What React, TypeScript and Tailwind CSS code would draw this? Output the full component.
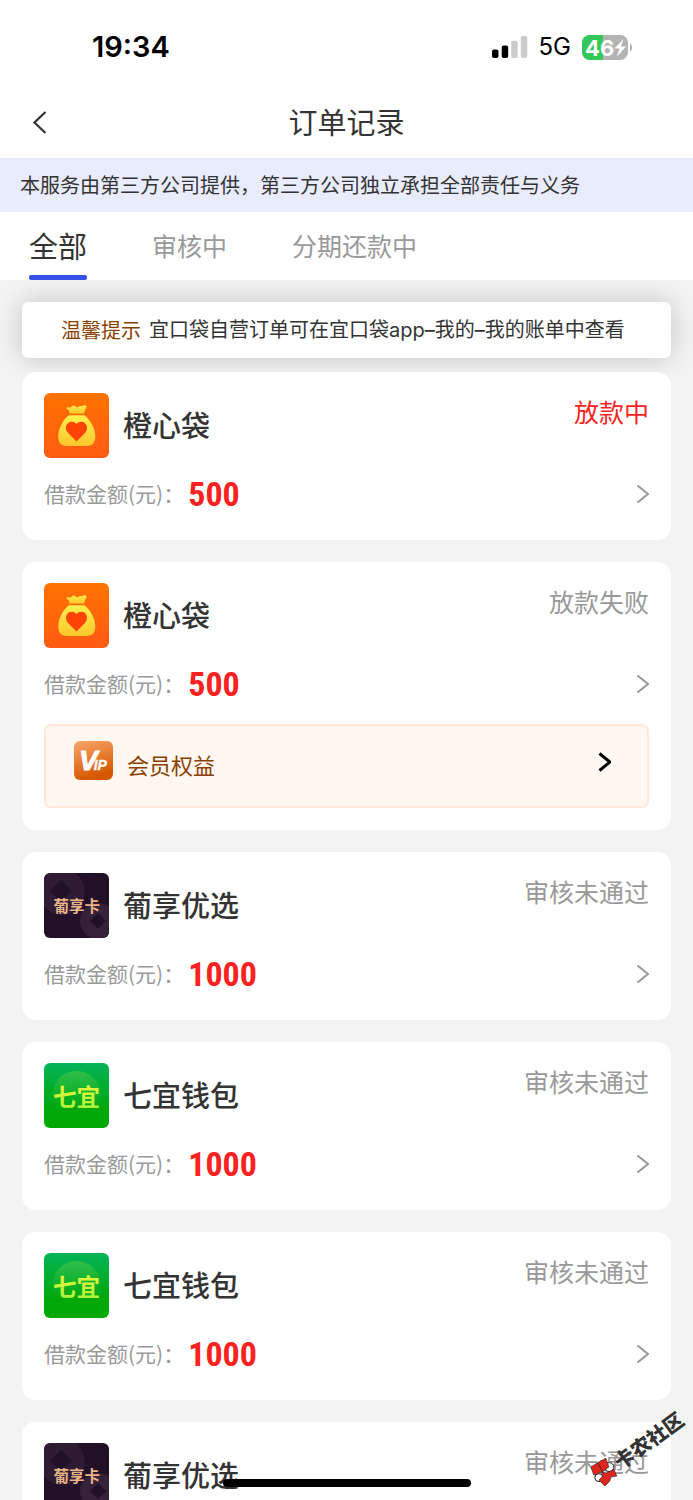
import { useState } from 'react';

type Brand = 'chengxin' | 'puxiang' | 'qiyi';

interface Order {
  id: string;
  brand: Brand;
  name: string;
  amount: number;
  status: string;
  active?: boolean;
  vip?: boolean;
}

const tabs = ['全部', '审核中', '分期还款中'];

const orders: Order[] = [
  { id: '1', brand: 'chengxin', name: '橙心袋', amount: 500, status: '放款中', active: true },
  { id: '2', brand: 'chengxin', name: '橙心袋', amount: 500, status: '放款失败', vip: true },
  { id: '3', brand: 'puxiang', name: '葡享优选', amount: 1000, status: '审核未通过' },
  { id: '4', brand: 'qiyi', name: '七宜钱包', amount: 1000, status: '审核未通过' },
  { id: '5', brand: 'qiyi', name: '七宜钱包', amount: 1000, status: '审核未通过' },
  { id: '6', brand: 'puxiang', name: '葡享优选', amount: 1000, status: '审核未通过' },
];

function StatusBar() {
  return (
    <div className="flex h-[88px] items-center justify-between pt-[6px] pr-[60px] pl-[92px] font-['Inter',sans-serif] text-black">
      <span className="text-[29px] font-semibold">19:34</span>
      <div className="flex items-center">
        <svg width="36" height="22" viewBox="0 0 36 22" aria-hidden="true">
          <rect x="0" y="13.5" width="6.5" height="8.5" rx="2" fill="#000" />
          <rect x="9.7" y="9.5" width="6.5" height="12.5" rx="2" fill="#000" />
          <rect x="19.2" y="4.8" width="6.5" height="17.2" rx="2" fill="#ccc" />
          <rect x="28.8" y="0" width="6.5" height="22" rx="2" fill="#ccc" />
        </svg>
        <span className="ml-[11px] text-[24px]">5G</span>
        <svg className="ml-[11px]" width="51" height="25" viewBox="0 0 51 25" aria-hidden="true">
          <defs>
            <clipPath id="battery">
              <rect x="0" y="0" width="46" height="25" rx="8" />
            </clipPath>
          </defs>
          <g clipPath="url(#battery)">
            <rect width="46" height="25" fill="#b3b3b3" />
            <rect width="21" height="25" fill="#34c759" />
          </g>
          <path d="M48 8.5c1.500.6 2 2 2 4s-.5 3.400-2 4z" fill="#b3b3b3" />
          <text x="3" y="20.500" fontSize="22" fontWeight="700" fill="#fff">46</text>
          <path d="M41.500 4 32.500 13.600h5L35 21.500 44 11.400h-5z" fill="#fff" />
        </svg>
      </div>
    </div>
  );
}

function Chevron({ className }: { className?: string }) {
  return (
    <svg className={className} width="14" height="20" viewBox="0 0 14 20" fill="none" stroke="currentColor" aria-hidden="true">
      <path d="M2.500 1.500 13 10 2.500 18.500" />
    </svg>
  );
}

function BrandIcon({ brand }: { brand: Brand }) {
  if (brand === 'chengxin') {
    return (
      <svg className="size-[65px] shrink-0 rounded-[6px]" viewBox="0 0 65 65" aria-hidden="true">
        <defs>
          <linearGradient id="orangeBg" x1="0" y1="0" x2="0" y2="1">
            <stop offset="0" stopColor="#ff7300" />
            <stop offset="1" stopColor="#ff5a12" />
          </linearGradient>
          <linearGradient id="bag" x1="0" y1="0" x2="0" y2="1">
            <stop offset="0" stopColor="#ffef4e" />
            <stop offset="1" stopColor="#ffc62c" />
          </linearGradient>
        </defs>
        <rect width="65" height="65" fill="url(#orangeBg)" />
        <path
          d="M25.500 20.500 25 17.500 22.300 15.500C22.500 14 24 14 25.500 14.400C27 15 28.200 12.300 30 12.400C31.500 12.500 31.700 14.200 33 14.200C34.500 14.200 35 12.600 37 13C38.500 13.300 39.500 12 41.300 12.300C43.200 12.700 42.500 14.500 41.500 16L40 20.500z"
          fill="url(#bag)"
        />
        <path
          d="M25 22.300H40.500C44.500 25.500 51.300 34 51.300 43.500C51.300 49.500 48.500 53 43 53H22.500C17 53 14.200 49.500 14.200 43.500C14.200 34 20.500 25.500 25 22.300Z"
          fill="url(#bag)"
        />
        <path
          d="M32.500 48.500 24.300 40.300C19.500 35 23 28.800 27.500 28.800C30 28.800 31.700 30 32.500 31.300C33.300 30 35 28.800 37.500 28.800C42 28.800 45.500 35 40.700 40.300Z"
          fill="#ff4405"
        />
      </svg>
    );
  }

  if (brand === 'puxiang') {
    return (
      <svg className="size-[65px] shrink-0 rounded-[6px]" viewBox="0 0 65 65" role="img">
        <rect width="65" height="65" fill="#211028" />
        <circle cx="18" cy="19" r="23" fill="#2f1b34" />
        <path d="M17 7 28 18 17 28 6 18z" fill="#211028" />
        <circle cx="54" cy="48" r="18" fill="#36203a" />
        <path d="M54 40 62 48 54 56 46 48z" fill="#211028" />
        <text x="9.500" y="39" fontSize="15.500" fontWeight="700" fill="#e9b489" fontFamily="'Noto Sans CJK SC', sans-serif">
          葡享卡
        </text>
      </svg>
    );
  }

  return (
    <svg className="size-[65px] shrink-0 rounded-[6px]" viewBox="0 0 65 65" role="img">
      <defs>
        <linearGradient id="greenBg" x1="0" y1="0" x2="0" y2="1">
          <stop offset="0" stopColor="#04b458" />
          <stop offset="0.700" stopColor="#00a80c" />
          <stop offset="1" stopColor="#00a800" />
        </linearGradient>
        <linearGradient id="greenDisc" x1="0" y1="0" x2="0" y2="1">
          <stop offset="0" stopColor="#4fc84c" stopOpacity="0.600" />
          <stop offset="0.800" stopColor="#2dbb20" stopOpacity="0" />
        </linearGradient>
        <linearGradient id="lime" x1="0" y1="0" x2="0" y2="1">
          <stop offset="0" stopColor="#f4fa3c" />
          <stop offset="1" stopColor="#a4f03c" />
        </linearGradient>
      </defs>
      <rect width="65" height="65" fill="url(#greenBg)" />
      <circle cx="32.500" cy="32" r="24" fill="url(#greenDisc)" />
      <text x="9" y="42.500" fontSize="23.500" fontWeight="700" fill="url(#lime)" fontFamily="'Noto Sans CJK SC', sans-serif">
        七宜
      </text>
    </svg>
  );
}

function VipIcon() {
  return (
    <svg width="39" height="39" viewBox="0 0 39 39" role="img">
      <defs>
        <linearGradient id="vipBg" x1="0" y1="0" x2="0.300" y2="1">
          <stop offset="0" stopColor="#f9a769" />
          <stop offset="1" stopColor="#d55700" />
        </linearGradient>
      </defs>
      <rect width="39" height="39" rx="6" fill="url(#vipBg)" />
      <text
        x="5"
        y="29"
        fontSize="28"
        fill="#fff"
        stroke="#fff"
        strokeWidth="1"
        fontFamily="'Liberation Sans', sans-serif"
        fontWeight="700"
        fontStyle="italic"
      >
        V<tspan dx="-4" fontSize="14" strokeWidth="0.300">IP</tspan>
      </text>
    </svg>
  );
}

function OrderCard({ order }: { order: Order }) {
  return (
    <article className="shrink-0 rounded-[14px] bg-white px-[22px] pt-[21px]">
      <div className="flex h-[65px]">
        <BrandIcon brand={order.brand} />
        <h2 className="ml-[14px] flex-1 self-center pb-1 text-[29px] leading-[40px] font-medium text-[#333]">{order.name}</h2>
        <span className={`text-[25px] leading-[36px] ${order.active ? 'text-[#fc2222]' : 'text-[#999]'}`}>{order.status}</span>
      </div>
      <button type="button" className="mt-5 flex h-8 w-full items-center text-left">
        <span className="text-[21px] text-[#999]">借款金额(元)：</span>
        <span className="ml-1 font-['Roboto_Condensed','Roboto',sans-serif] text-[34px] font-bold text-[#fc2222]">
          {order.amount}
        </span>
        <Chevron className="ml-auto stroke-2 text-[#999]" />
      </button>
      {order.vip ? (
        <button
          type="button"
          className="mt-6 mb-[22px] flex h-[84px] w-full items-center rounded-[7px] border-2 border-[#ffe8d9] bg-[#fff7f0] pr-[36px] pb-3 pl-[28px]"
        >
          <VipIcon />
          <span className="mt-2 ml-[14px] text-[22px] text-[#8a4100]">会员权益</span>
          <Chevron className="mt-1 ml-auto stroke-3 text-black" />
        </button>
      ) : (
        <div className="h-[30px]" />
      )}
    </article>
  );
}

function Watermark() {
  return (
    <div className="pointer-events-none absolute right-0 bottom-[38px] flex w-[110px] -rotate-36 items-center">
      <svg className="shrink-0 rotate-36" width="28" height="28" viewBox="0 0 28 28" aria-hidden="true">
        <circle cx="18.500" cy="9" r="4.500" fill="#fff" stroke="#222" />
        <circle cx="8" cy="19.500" r="4" fill="#fff" stroke="#222" />
        <g fill="#e0261c" stroke="#222" strokeWidth="0.600">
          <path d="M0 9 8 4 15 0 18 9 11 14 3 17z" />
          <path d="M11 14 16 15 23 11 26 18 20 19 19 23 14 28 8 22 12 18z" />
        </g>
        <path d="M7 5 12 14" fill="none" stroke="#222" strokeWidth="0.800" />
      </svg>
      <span className="text-[20px] leading-[28px] font-black whitespace-nowrap text-[#333]">卡农社区</span>
    </div>
  );
}

export default function App() {
  const [activeTab, setActiveTab] = useState('全部');

  return (
    <div className="relative flex h-screen flex-col overflow-hidden bg-[#f3f3f3] font-['Noto_Sans_CJK_SC',sans-serif] text-[#333]">
      <header className="bg-white">
        <StatusBar />
        <div className="grid h-[70px] grid-cols-[1fr_auto_1fr] items-center px-8">
          <button type="button" aria-label="返回" className="w-4">
            <svg width="16" height="24" viewBox="0 0 16 24" fill="none" stroke="#333" strokeWidth="2.200" aria-hidden="true">
              <path d="M13.500 1 2.500 11.500 13.500 22" />
            </svg>
          </button>
          <h1 className="pb-[2px] text-[29px]">订单记录</h1>
        </div>
        <p className="flex h-[54px] items-center bg-[#e9ecfc] px-5 text-[20px]">
          本服务由第三方公司提供，第三方公司独立承担全部责任与义务
        </p>
        <nav className="flex h-[68px] gap-[65px] px-[29px]">
          {tabs.map((tab) => (
            <button
              key={tab}
              type="button"
              onClick={() => setActiveTab(tab)}
              className={`relative ${activeTab === tab ? 'text-[29px] text-[#333]' : 'text-[25px] text-[#999]'}`}
            >
              {tab}
              {activeTab === tab && <span className="absolute inset-x-0 bottom-0 h-[5px] rounded-[2px] bg-[#3452e8]" />}
            </button>
          ))}
        </nav>
      </header>

      <main className="flex min-h-0 flex-1 flex-col overflow-y-auto px-[22px] pt-[22px] [scrollbar-width:none]">
        <p className="mb-[14px] flex h-14 shrink-0 items-center gap-2 rounded-[6px] bg-white px-[39px] text-[20px] whitespace-nowrap shadow-[0_0_28px_rgba(0,0,0,0.2)]">
          <span className="text-[#8a4100]">温馨提示</span>
          <span className="font-['Inter','Noto_Sans_CJK_SC',sans-serif]">宜口袋自营订单可在宜口袋app–我的–我的账单中查看</span>
        </p>
        <div className="flex flex-col gap-[22px]">
          {orders.map((order) => (
            <OrderCard key={order.id} order={order} />
          ))}
        </div>
      </main>

      <Watermark />
      <div className="absolute bottom-[13px] left-1/2 h-2 w-[248px] -translate-x-1/2 rounded-full bg-black" />
    </div>
  );
}
